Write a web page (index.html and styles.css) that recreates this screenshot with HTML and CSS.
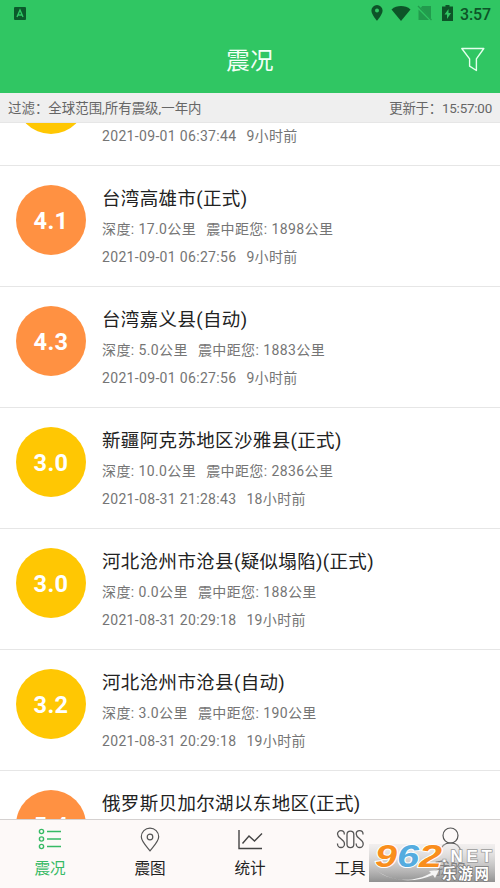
FILE: index.html
```html
<!DOCTYPE html>
<html lang="zh-CN">
<head>
<meta charset="utf-8">
<title>震况</title>
<link rel="stylesheet" href="styles.css">
</head>
<body>
<div class="app">
  <header class="header">
    <div class="status">
      <svg class="app-badge" width="12" height="13" viewBox="0 0 12 13"><rect width="12" height="13" rx="1" fill="#0b5a2b"/><path d="M3 10L6 3l3 7M4 8h4" fill="none" stroke="#2fc864" stroke-width="1.4"/></svg>
      <div class="status-icons">
        <svg class="s-pin" width="12" height="16" viewBox="0 0 12 16"><path fill="#0d5428" fill-rule="evenodd" d="M6 0a5.6 5.6 0 0 0-5.6 5.6C.4 9.8 6 15.8 6 15.8s5.6-6 5.6-10.2A5.6 5.6 0 0 0 6 0zm0 3.5a2 2 0 1 1 0 4 2 2 0 0 1 0-4z"/></svg>
        <svg class="s-wifi" width="20" height="15" viewBox="0 0 20 15"><path fill="#0d5428" d="M.5 3.4C6-1 14-1 19.5 3.4L10 15z"/></svg>
        <svg class="s-sim" width="16" height="16" viewBox="0 0 16 16"><path fill="#229b4d" d="M5.2 1H14v12.7L3.8 3zM1.5 4.6L12 15H1.5z"/><path d="M1 1l13.5 14" stroke="#229b4d" stroke-width="1.3"/></svg>
        <svg class="s-bat" width="11" height="16" viewBox="0 0 11 16"><path fill="#0d5428" fill-rule="evenodd" d="M3.5 0h4v1.6H11V16H0V1.6h3.5zM6.5 4L2.5 9.5H5V14l4-6H6.5z"/></svg>
        <span class="clock">3:57</span>
      </div>
    </div>
    <div class="bar">
      <h1>震况</h1>
      <svg class="filter" width="26" height="26" viewBox="0 0 26 26" fill="none" stroke="#e4ffed" stroke-width="1.4" stroke-linejoin="round"><path d="M1.8 1.5h22l-7.4 10.3v11.7l-6.8-4.3v-7.4z"/></svg>
    </div>
  </header>
  <div class="filterbar"><span>过滤：全球范围,所有震级,一年内</span><span class="updated">更新于：15:57:00</span></div>
  <main class="list">
    <article class="quake first"><div class="mag yellow"></div><div class="info"><p class="line time"><span>2021-09-01 06:37:44</span><span>9小时前</span></p></div></article>
    <article class="quake"><div class="mag orange">4.1</div><div class="info"><h2>台湾高雄市(正式)</h2><p class="line"><span>深度: 17.0公里</span><span>震中距您: 1898公里</span></p><p class="line time"><span>2021-09-01 06:27:56</span><span>9小时前</span></p></div></article>
    <article class="quake"><div class="mag orange">4.3</div><div class="info"><h2>台湾嘉义县(自动)</h2><p class="line"><span>深度: 5.0公里</span><span>震中距您: 1883公里</span></p><p class="line time"><span>2021-09-01 06:27:56</span><span>9小时前</span></p></div></article>
    <article class="quake"><div class="mag yellow">3.0</div><div class="info"><h2>新疆阿克苏地区沙雅县(正式)</h2><p class="line"><span>深度: 10.0公里</span><span>震中距您: 2836公里</span></p><p class="line time"><span>2021-08-31 21:28:43</span><span>18小时前</span></p></div></article>
    <article class="quake"><div class="mag yellow">3.0</div><div class="info"><h2>河北沧州市沧县(疑似塌陷)(正式)</h2><p class="line"><span>深度: 0.0公里</span><span>震中距您: 188公里</span></p><p class="line time"><span>2021-08-31 20:29:18</span><span>19小时前</span></p></div></article>
    <article class="quake"><div class="mag yellow">3.2</div><div class="info"><h2>河北沧州市沧县(自动)</h2><p class="line"><span>深度: 3.0公里</span><span>震中距您: 190公里</span></p><p class="line time"><span>2021-08-31 20:29:18</span><span>19小时前</span></p></div></article>
    <article class="quake"><div class="mag orange">5.4</div><div class="info"><h2>俄罗斯贝加尔湖以东地区(正式)</h2></div></article>
  </main>
  <nav class="tabs">
    <div class="tab active">
      <svg width="26" height="26" viewBox="0 0 26 26" fill="none" stroke="currentColor" stroke-width="1.4"><circle cx="4.5" cy="4.5" r="2.1"/><circle cx="4.5" cy="12" r="2.1"/><circle cx="4.5" cy="19.5" r="2.1"/><path d="M10 4.5h14M10 12h14M10 19.5h14"/></svg>
      <span>震况</span>
    </div>
    <div class="tab">
      <svg width="26" height="26" viewBox="0 0 26 26" fill="none" stroke="#555" stroke-width="1.2"><path d="M13 23.8C10 20 4.3 14.5 4.3 9.8a8.7 8.7 0 0 1 17.4 0C21.7 14.5 16 20 13 23.8z"/><circle cx="13" cy="10" r="2.8"/></svg>
      <span>震图</span>
    </div>
    <div class="tab">
      <svg width="26" height="26" viewBox="0 0 26 26" fill="none" stroke="#444" stroke-width="1.4"><path d="M2 3v18.5h23M5.500 16.500l6.500-7.500 5.500 5 7.500-7.500"/></svg>
      <span>统计</span>
    </div>
    <div class="tab">
      <svg width="28" height="26" viewBox="0 0 28 26" fill="none" stroke="#555" stroke-width="1.3"><path d="M8.300 7.500V7a3.400 3.400 0 0 0-6.800 0c0 4.600 7 5 7 10a3.500 3.500 0 0 1-7 0v-.6M11 7.500a3.400 3.400 0 0 1 6.800 0v9.700a3.400 3.400 0 0 1-6.800 0zM27 7.500V7a3.400 3.400 0 0 0-6.800 0c0 4.600 7 5 7 10a3.500 3.500 0 0 1-7 0v-.6"/></svg>
      <span>工具</span>
    </div>
    <div class="tab">
      <svg width="26" height="26" viewBox="0 0 26 26" fill="none" stroke="#555" stroke-width="1.2"><circle cx="13.500" cy="8.500" r="7.500"/><path d="M3 25c1-5.500 5-9 10.500-9s9.500 3.500 10.500 9"/></svg>
      <span>我的</span>
    </div>
  </nav>
  <div class="watermark">
    <svg width="126" height="40" viewBox="0 0 126 40">
      <defs><linearGradient id="shade" x1="0" y1="0" x2="0" y2="1"><stop offset="0" stop-color="#ddd" stop-opacity=".35"/><stop offset="1" stop-color="#8b8b8b" stop-opacity=".95"/></linearGradient></defs>
      <rect width="126" height="38" y="2" fill="url(#shade)"/>
      <path d="M7 28c15 12 38 13 55 3l-2-2 10-1-4 8-2-3C44 42 20 39 7 28z" fill="#f5f5f5"/>
      <g class="wm-num"><text x="6" y="25" fill="#f98e1d" textLength="22" lengthAdjust="spacingAndGlyphs">9</text><text x="28" y="25" fill="#55acdf" textLength="22" lengthAdjust="spacingAndGlyphs">6</text><text x="50" y="25" fill="#f98e1d" textLength="23" lengthAdjust="spacingAndGlyphs">2</text></g>
      <text class="wm-net" x="73" y="20" textLength="50">.NET</text>
      <text class="wm-cn" x="73" y="37" textLength="47">乐游网</text>
    </svg>
  </div>
</div>
</body>
</html>
```
FILE: styles.css
```css
* { box-sizing: border-box; }
body { margin: 0; font-family: Roboto, "Noto Sans CJK SC", sans-serif; }
h1, h2, p { margin: 0; font-weight: 400; }
svg { display: block; flex: none; }
.app { position: relative; width: 500px; height: 888px; display: flex; flex-direction: column; background: #fff; overflow: hidden; }
.header { height: 93px; flex: none; background: #30c663; }
.status { height: 27px; display: flex; justify-content: space-between; padding: 0 9px 0 14px; }
.app-badge { margin-top: 7px; }
.status-icons { display: flex; align-items: flex-start; padding-top: 5px; }
.s-wifi { margin: 1px 0 0 8px; }
.s-sim { margin-left: 6px; }
.s-bat { margin-left: 9px; }
.clock { margin-left: 7px; font-size: 16px; line-height: 19px; font-weight: 500; color: #0d5428; letter-spacing: -.1px; width: 31px; white-space: nowrap; }
.bar { height: 66px; display: grid; grid-template-columns: 1fr auto 1fr; align-items: center; padding-right: 14px; }
.bar h1 { grid-column: 2; font-size: 23.5px; line-height: 34px; padding-top: 2px; color: #f4fff7; letter-spacing: .3px; margin-left: 14px; }
.filter { justify-self: end; }
.filterbar { height: 30px; flex: none; display: flex; justify-content: space-between; padding: 0 8px; border-bottom: 1px solid #e6e6e6; background: #efefef; color: #666; font-size: 13.4px; line-height: 31px; letter-spacing: .05px; white-space: nowrap; }
.updated { letter-spacing: -.2px; }
.list { flex: 1; min-height: 0; overflow: hidden; }
.quake { height: 121px; display: flex; padding: 19px 16px 0; border-bottom: 1px solid #e6e6e6; }
.quake.first { margin-top: -78px; }
.quake.first .info { padding-top: 58px; }
.mag { width: 70px; height: 70px; flex: none; border-radius: 50%; color: #fff; font-size: 23.5px; font-weight: 700; line-height: 73px; text-align: center; letter-spacing: .4px; }
.yellow { background: #ffc703; }
.orange { background: #ff9142; }
.info { margin-left: 16px; white-space: nowrap; }
.info h2 { font-size: 18.5px; line-height: 28px; color: #222; letter-spacing: .35px; }
.line { display: flex; gap: 10px; margin-top: 2px; font-size: 14px; line-height: 28px; color: #757575; letter-spacing: .4px; }
.line.time { margin-top: 0; letter-spacing: .33px; }
.tabs { height: 69px; flex: none; display: grid; grid-template-columns: repeat(5, 1fr); background: #fdf9f8; border-top: 1px solid #d5d1d0; }
.tab { display: flex; flex-direction: column; align-items: center; padding-top: 7px; color: #222; font-size: 15.6px; }
.tab span { line-height: 24px; margin-top: 4px; }
.tab.active { color: #37ba65; }
.watermark { position: absolute; left: 369px; top: 842px; }
.wm-num { font: italic 700 32px "Liberation Sans", sans-serif; stroke: #fff; stroke-width: 2px; paint-order: stroke; }
.wm-net { font: 700 17px "Liberation Sans", sans-serif; fill: #fff; stroke: #999; stroke-width: 1.5px; paint-order: stroke; }
.wm-cn { font: 700 14.5px "Noto Sans CJK SC", sans-serif; fill: #fff; stroke: #777; stroke-width: 1.5px; paint-order: stroke; }
```
